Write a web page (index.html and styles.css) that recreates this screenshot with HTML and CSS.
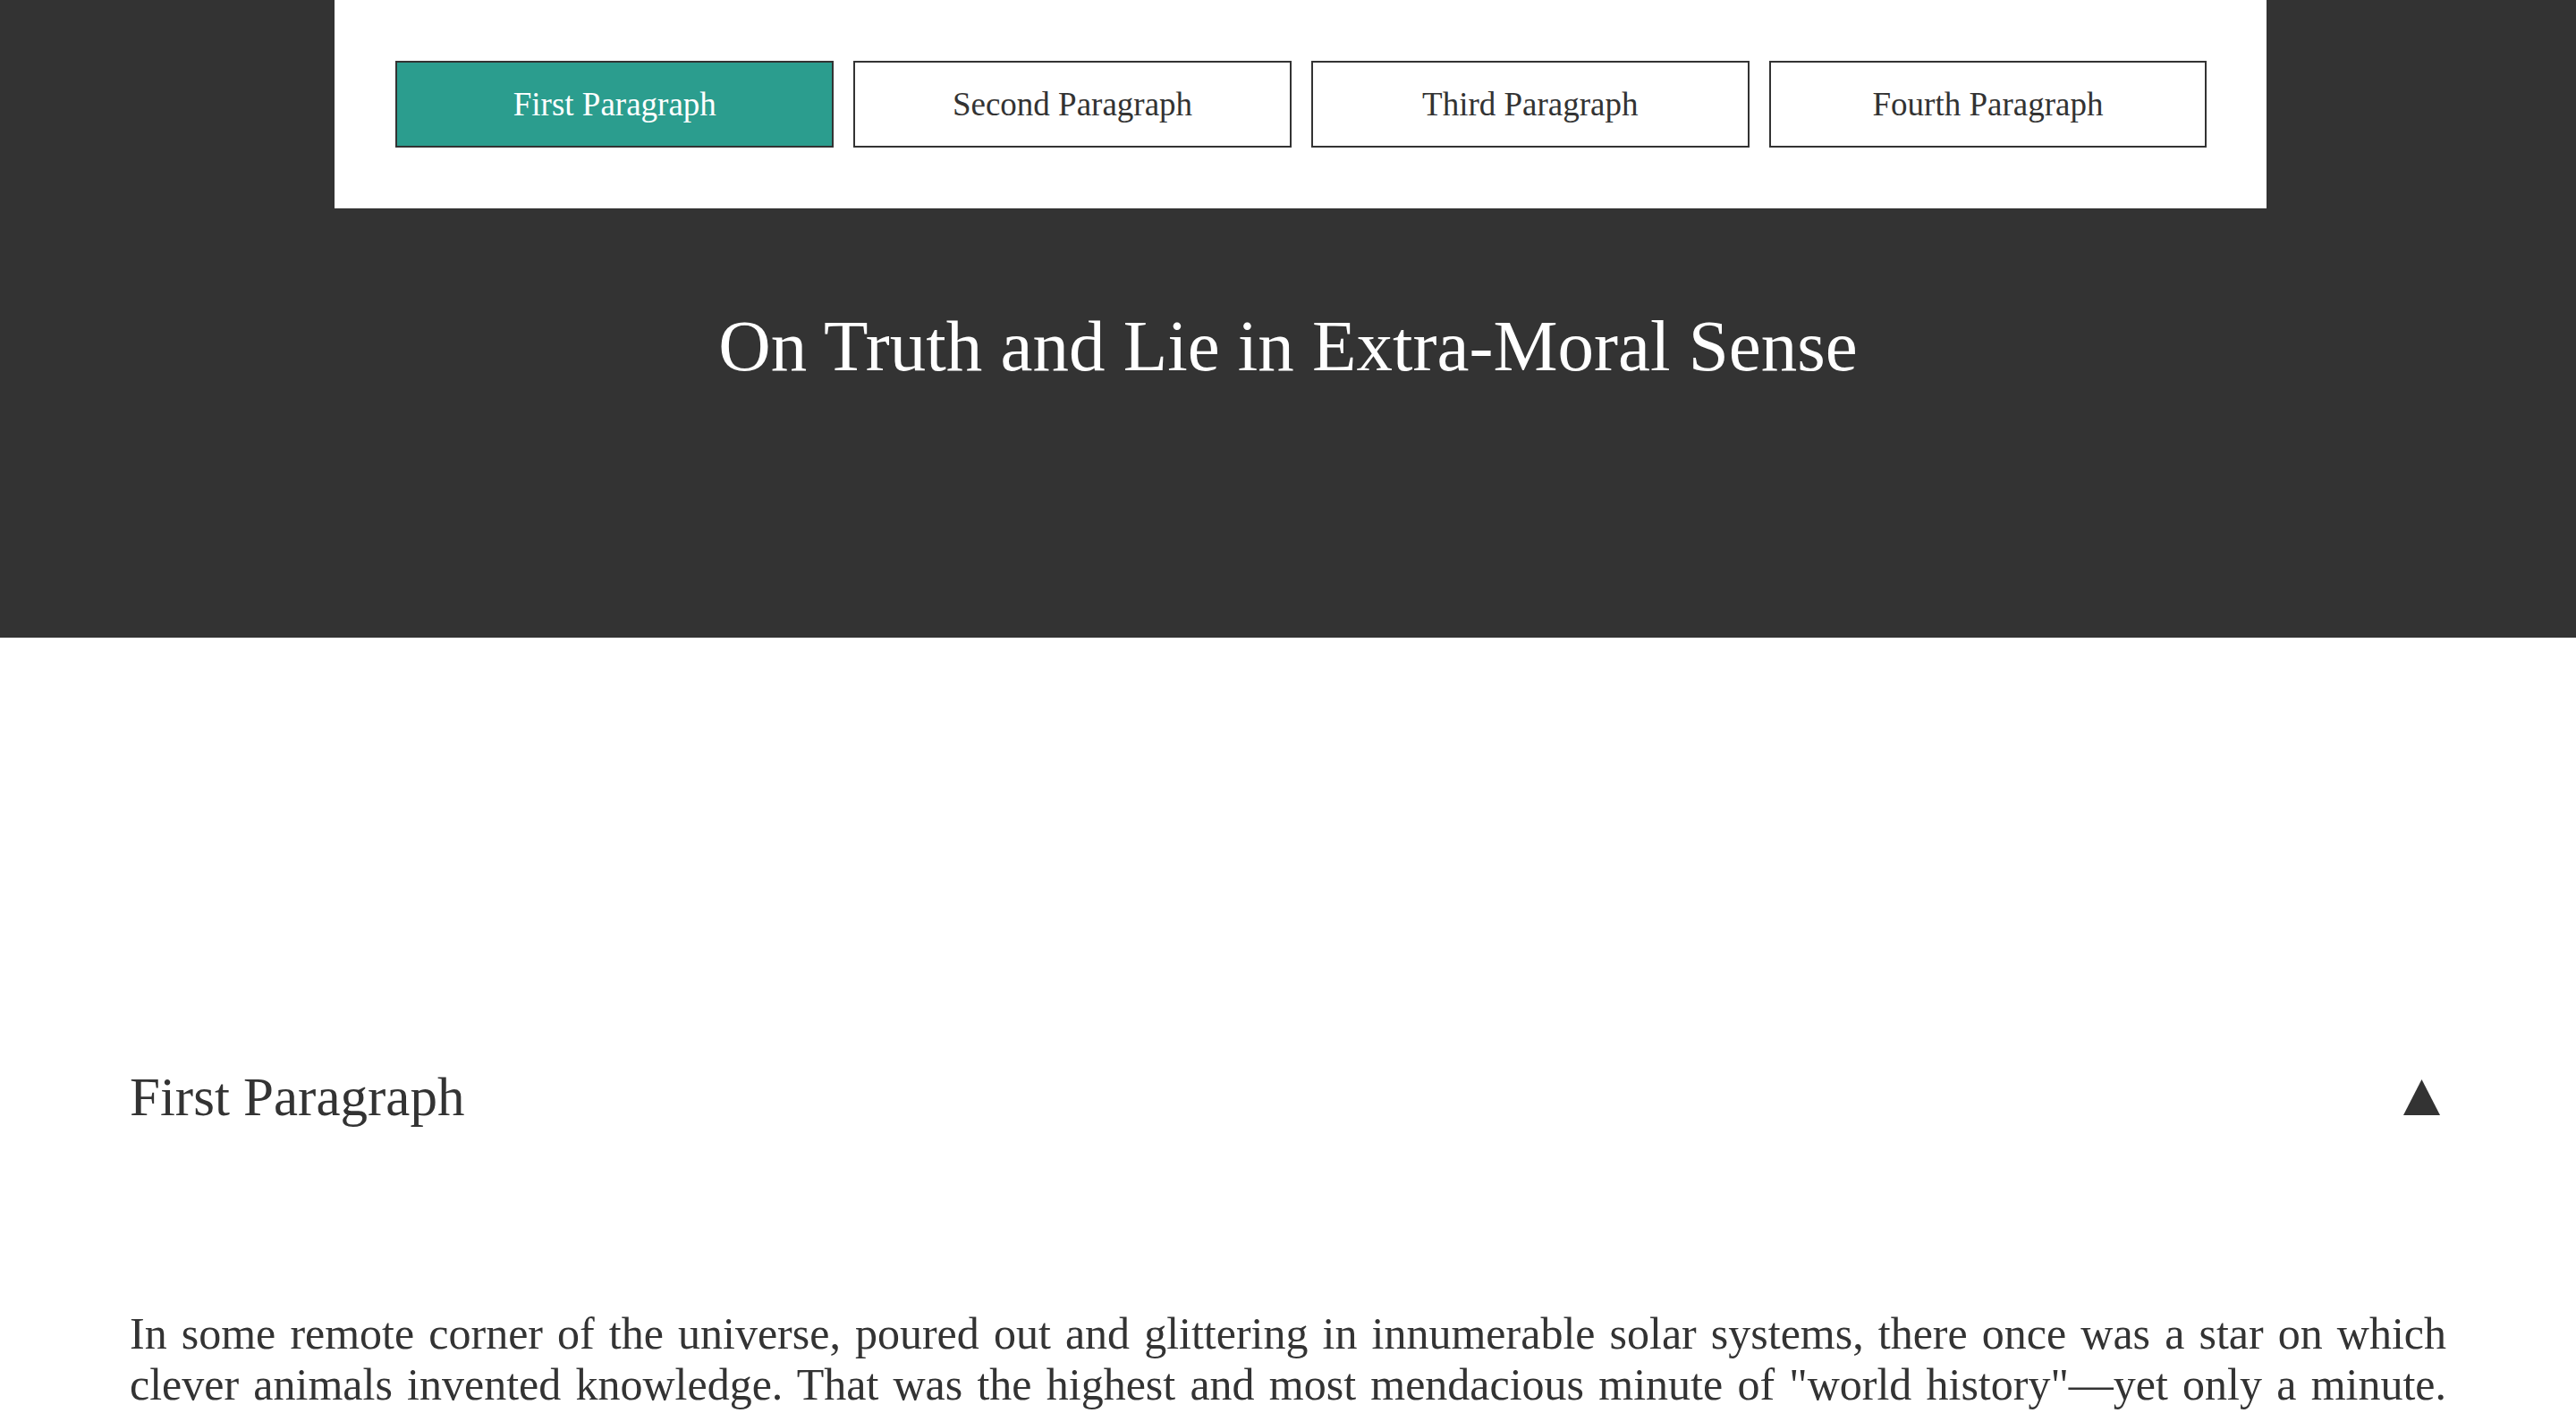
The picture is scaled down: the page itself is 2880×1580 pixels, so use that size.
FILE: index.html
```html
<!DOCTYPE html>
<html lang="en">
<head>
<meta charset="utf-8">
<title>On Truth and Lie in Extra-Moral Sense</title>
<link rel="stylesheet" href="styles.css">
</head>
<body>
<header class="hero">
  <nav class="nav-box">
    <button class="nav-btn is-active">First Paragraph</button>
    <button class="nav-btn">Second Paragraph</button>
    <button class="nav-btn">Third Paragraph</button>
    <button class="nav-btn">Fourth Paragraph</button>
  </nav>
  <h1 class="hero-title">On Truth and Lie in Extra-Moral Sense</h1>
</header>
<main class="content">
  <section class="chapter">
    <div class="chapter-head">
      <h2 class="chapter-title">First Paragraph</h2>
      <svg class="chapter-toggle" width="41" height="40" viewBox="0 0 41 40" aria-hidden="true"><polygon points="20.5,0 41,40 0,40" fill="#333"/></svg>
    </div>
    <p class="chapter-text">In some remote corner of the universe, poured out and glittering in innumerable solar systems, there once was a star on which clever animals invented knowledge. That was the highest and most mendacious minute of "world history"—yet only a minute. After nature had drawn a few breaths the star grew cold, and the clever animals had to die. One might invent such a fable and still not have illustrated sufficiently how wretched, how shadowy and flighty, how aimless and arbitrary, the human intellect appears in nature.</p>
  </section>
</main>
</body>
</html>
```
FILE: styles.css
```css
html, body {
  margin: 0;
  padding: 0;
}
body {
  font-family: "Liberation Serif", "Times New Roman", serif;
  color: #333;
  background: #fff;
}
.hero {
  background: #333;
  padding-bottom: 285px;
}
.nav-box {
  margin-left: 13%;
  width: 75%;
  box-sizing: border-box;
  background: #fff;
  padding: 68px 67px 68px 68px;
  display: flex;
  gap: 22px;
}
.nav-btn {
  flex: 1;
  height: 97px;
  box-sizing: border-box;
  border: 2px solid #333;
  background: #fff;
  color: #333;
  font-family: "Liberation Serif", "Times New Roman", serif;
  font-size: 37px;
  padding: 0;
  display: flex;
  align-items: center;
  justify-content: center;
}
.nav-btn.is-active {
  background: #2b9d8e;
  color: #fff;
}
.hero-title {
  margin: 114px 0 0;
  font-weight: normal;
  font-size: 81px;
  line-height: 81px;
  color: #fff;
  text-align: center;
}
.content {
  padding: 483px 145px 0;
}
.chapter-head {
  display: flex;
  align-items: center;
  justify-content: space-between;
}
.chapter-title {
  margin: 0;
  font-weight: normal;
  font-size: 61px;
  line-height: 61px;
}
.chapter-toggle {
  margin-right: 7px;
}
.chapter-text {
  margin: 206px 0 0;
  font-size: 50px;
  line-height: 57px;
  text-align: justify;
}
```
